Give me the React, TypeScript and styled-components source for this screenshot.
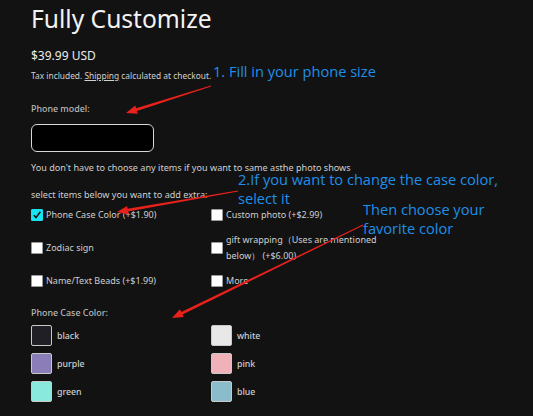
import React from "react";
import styled, { createGlobalStyle } from "styled-components";

const GlobalStyle = createGlobalStyle`
  body {
    margin: 0;
    background: #121212;
    font-family: "Noto Sans", "Open Sans", sans-serif;
  }
`;

interface Extra {
  label: string;
  checked?: boolean;
}

const extras: Extra[] = [
  { label: "Phone Case Color (+$1.90)", checked: true },
  { label: "Custom photo (+$2.99)" },
  { label: "Zodiac sign" },
  { label: "gift wrapping（Uses are mentioned below） (+$6.00)" },
  { label: "Name/Text Beads (+$1.99)" },
  { label: "More" },
];

const colors = [
  { name: "black", hex: "#1f1f25" },
  { name: "white", hex: "#e8e8e8" },
  { name: "purple", hex: "#8a7db8" },
  { name: "pink", hex: "#f0b2b8" },
  { name: "green", hex: "#88e9dc" },
  { name: "blue", hex: "#8abccb" },
];

const arrows = [
  { x1: 211, y1: 86, x2: 126, y2: 113 },
  { x1: 238, y1: 191, x2: 117, y2: 212 },
  { x1: 363, y1: 225, x2: 172, y2: 318 },
];

// tapered red stroke with a filled head at (x2, y2)
const arrowPath = (a: { x1: number; y1: number; x2: number; y2: number }) => {
  const dx = a.x2 - a.x1;
  const dy = a.y2 - a.y1;
  const len = Math.hypot(dx, dy);
  const ux = dx / len;
  const uy = dy / len;
  const nx = -uy;
  const ny = ux;
  const head = 11;
  const bx = a.x2 - ux * head;
  const by = a.y2 - uy * head;
  const w0 = 0.4;
  const w1 = 1.4;
  const hw = 4.3;
  const p = (x: number, y: number) => `${x.toFixed(1)},${y.toFixed(1)}`;
  return [
    "M" + p(a.x1 + nx * w0, a.y1 + ny * w0),
    "L" + p(bx + nx * w1, by + ny * w1),
    "L" + p(bx + nx * hw, by + ny * hw),
    "L" + p(a.x2, a.y2),
    "L" + p(bx - nx * hw, by - ny * hw),
    "L" + p(bx - nx * w1, by - ny * w1),
    "L" + p(a.x1 - nx * w0, a.y1 - ny * w0),
    "Z",
  ].join(" ");
};

export default function App() {
  return (
    <>
      <GlobalStyle />
      <Page>
        <Title>Fully Customize</Title>
        <Price>$39.99 USD</Price>
        <Tax>
          Tax included. <u>Shipping</u> calculated at checkout.
        </Tax>

        <Label>Phone model:</Label>
        <ModelInput />

        <Note>You don't have to choose any items if you want to same asthe photo shows</Note>
        <Note>select items below you want to add extra:</Note>

        <OptionGrid>
          {extras.map((e) => (
            <Option key={e.label}>
              <Box $checked={e.checked}>
                {e.checked && (
                  <svg width="10" height="10" viewBox="0 0 10 10">
                    <path d="M1.8 5.2 L4 7.6 L8.4 1.8" fill="none" stroke="#1a1a1a" strokeWidth="1.6" />
                  </svg>
                )}
              </Box>
              <OptionText>{e.label}</OptionText>
            </Option>
          ))}
        </OptionGrid>

        <SectionLabel>Phone Case Color:</SectionLabel>
        <SwatchGrid>
          {colors.map((c) => (
            <SwatchRow key={c.name}>
              <Swatch style={{ background: c.hex }} />
              <SwatchName>{c.name}</SwatchName>
            </SwatchRow>
          ))}
        </SwatchGrid>

        <Overlay width="533" height="416">
          {arrows.map((a, i) => (
            <path key={i} d={arrowPath(a)} fill="#e8211c" />
          ))}
        </Overlay>
        <Hint $x={213} $y={62}>1. Fill in your phone size</Hint>
        <Hint $x={238} $y={170}>
          2.If you want to change the case color,
          <br />
          select it
        </Hint>
        <Hint $x={363} $y={200}>
          Then choose your
          <br />
          favorite color
        </Hint>
      </Page>
    </>
  );
}

const Page = styled.div`
  position: relative;
  height: 416px;
  overflow: hidden;
  padding: 3px 0 0 31px;
  box-sizing: border-box;
  color: #cfcfcf;
`;

const Title = styled.h1`
  margin: 0;
  font-size: 24.6px;
  font-weight: 400;
  line-height: 32px;
  color: #f3f3f3;
`;

const Price = styled.div`
  margin-top: 13px;
  font-size: 12px;
  line-height: 16px;
  color: #ececec;
`;

const Tax = styled.div`
  margin-top: 5px;
  font-size: 8.4px;
  line-height: 14px;
  color: #d0d0d0;
`;

const Label = styled.div`
  margin-top: 19px;
  font-size: 8.9px;
  line-height: 14px;
  font-weight: 500;
  color: #b9b9b9;
`;

const SectionLabel = styled(Label)`
  margin-top: 17px;
`;

const ModelInput = styled.div`
  margin-top: 8px;
  width: 123px;
  height: 28px;
  box-sizing: border-box;
  border: 1px solid #d8d8d8;
  border-radius: 6px;
  background: #000;
`;

const Note = styled.div`
  margin-top: 10px;
  font-size: 9.1px;
  line-height: 12px;
  color: #cfcfcf;
  & + & {
    margin-top: 15px;
  }
`;

const OptionGrid = styled.div`
  margin-top: 6px;
  display: grid;
  grid-template-columns: 180px 180px;
  row-gap: 9px;
  align-items: center;
`;

const Option = styled.div`
  display: flex;
  align-items: center;
  gap: 3px;
`;

const Box = styled.span<{ $checked?: boolean }>`
  flex: none;
  width: 12px;
  height: 12px;
  box-sizing: border-box;
  border: 1px solid ${(p) => (p.$checked ? "#19dff0" : "#9a9a9a")};
  border-radius: 1px;
  background: ${(p) => (p.$checked ? "#16e4f4" : "#ffffff")};
  display: flex;
  align-items: center;
  justify-content: center;
`;

const OptionText = styled.span`
  max-width: 156px;
  font-size: 9px;
  line-height: 16px;
  color: #cfcfcf;
`;

const SwatchGrid = styled.div`
  margin-top: 5px;
  display: grid;
  grid-template-columns: 180px 180px;
  row-gap: 7px;
`;

const SwatchRow = styled.div`
  display: flex;
  align-items: center;
  gap: 5px;
`;

const Swatch = styled.span`
  width: 21px;
  height: 21px;
  box-sizing: border-box;
  border: 1.5px solid #c9c9c9;
  border-radius: 2px;
`;

const SwatchName = styled.span`
  font-size: 8.8px;
  color: #cfcfcf;
  font-weight: 500;
`;

const Overlay = styled.svg`
  position: absolute;
  left: 0;
  top: 0;
  pointer-events: none;
`;

const Hint = styled.div<{ $x: number; $y: number }>`
  position: absolute;
  left: ${(p) => p.$x}px;
  top: ${(p) => p.$y}px;
  font-family: "Open Sans", "Noto Sans", sans-serif;
  font-size: 14.6px;
  line-height: 19px;
  color: #1f8fe8;
  white-space: nowrap;
`;
